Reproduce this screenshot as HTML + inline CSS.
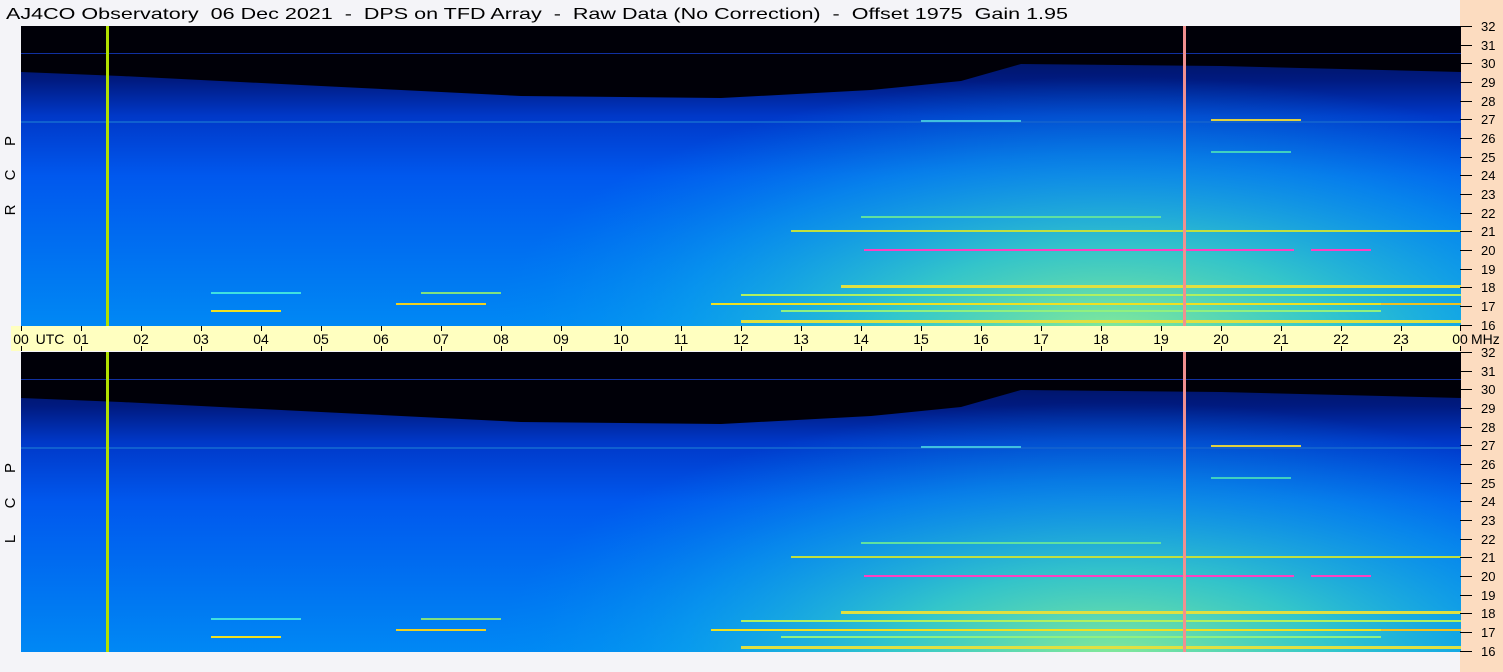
<!DOCTYPE html>
<html><head><meta charset="utf-8"><style>
html,body{margin:0;padding:0;background:#f4f4f8;width:1503px;height:672px;overflow:hidden}
svg{display:block;font-family:"Liberation Sans",sans-serif}
</style></head><body>
<svg width="1503" height="672" viewBox="0 0 1503 672" xmlns="http://www.w3.org/2000/svg">
<defs>
<linearGradient id="vg" x1="0" y1="0" x2="0" y2="1">
<stop offset="0" stop-color="#000c40"/>
<stop offset="0.18" stop-color="#001a80"/>
<stop offset="0.3" stop-color="#0038c8"/>
<stop offset="0.5" stop-color="#0058ee"/>
<stop offset="1" stop-color="#0088f4"/>
</linearGradient>
<radialGradient id="cy" cx="1090" cy="310" r="620" gradientUnits="userSpaceOnUse" gradientTransform="translate(0,310) scale(1,0.42) translate(0,-310)">
<stop offset="0" stop-color="#90f090" stop-opacity="0.95"/>
<stop offset="0.35" stop-color="#40d8c0" stop-opacity="0.8"/>
<stop offset="0.7" stop-color="#10b0e8" stop-opacity="0.45"/>
<stop offset="1" stop-color="#0090f0" stop-opacity="0"/>
</radialGradient>
<g id="panel">
<rect x="0" y="0" width="1440" height="300" fill="url(#vg)"/>
<rect x="0" y="0" width="1440" height="300" fill="url(#cy)"/>
<polygon points="0,0 1440,0 1440,46 1200,40 1000,38 940,55 850,64 700,72 500,70 300,60 100,50 0,46" fill="#000008"/>
<rect x="0" y="27" width="1440" height="1" fill="#1030a0"/>
<rect x="0" y="95" width="1440" height="2" fill="#1060d0"/>
<rect x="900" y="94" width="100" height="2" fill="#40c0e0"/>
<rect x="1190" y="93" width="90" height="2" fill="#e0d040"/>
<rect x="843" y="223" width="430" height="2" fill="#ff40c0"/>
<rect x="1290" y="223" width="60" height="2" fill="#ff40c0"/>
<rect x="770" y="204" width="670" height="2" fill="#c0e040"/>
<rect x="840" y="190" width="300" height="2" fill="#60e0a0"/>
<rect x="820" y="259" width="620" height="3" fill="#e0e040"/>
<rect x="720" y="268" width="720" height="2" fill="#b0f060"/>
<rect x="690" y="277" width="670" height="2" fill="#f0e020"/>
<rect x="1360" y="277" width="80" height="2" fill="#f0c020"/>
<rect x="760" y="284" width="600" height="2" fill="#90f080"/>
<rect x="720" y="294" width="720" height="3" fill="#e0e040"/>
<rect x="375" y="277" width="90" height="2" fill="#f0d020"/>
<rect x="190" y="266" width="90" height="2" fill="#40e0e0"/>
<rect x="190" y="284" width="70" height="2" fill="#f0e020"/>
<rect x="400" y="266" width="80" height="2" fill="#80e080"/>
<rect x="1190" y="125" width="80" height="2" fill="#40d0c0"/>
<rect x="85" y="0" width="3" height="300" fill="#b0e000"/>
<rect x="1162" y="0" width="3" height="300" fill="#f09090"/>
</g>
</defs>
<text x="6" y="19" font-size="16" fill="#000" xml:space="preserve" style="white-space:pre" textLength="1062" lengthAdjust="spacingAndGlyphs">AJ4CO Observatory  06 Dec 2021  -  DPS on TFD Array  -  Raw Data (No Correction)  -  Offset 1975  Gain 1.95</text>
<rect x="1460" y="0" width="43" height="672" fill="#fcdcc0"/>
<use href="#panel" x="21" y="26"/>
<use href="#panel" x="21" y="352"/>
<rect x="11" y="326" width="1449" height="25" fill="#ffffc0"/>
<g stroke="#000" stroke-width="1">
<path d="M21.5 326v5M21.5 346v5M81.5 326v5M81.5 346v5M141.5 326v5M141.5 346v5M201.5 326v5M201.5 346v5M261.5 326v5M261.5 346v5M321.5 326v5M321.5 346v5M381.5 326v5M381.5 346v5M441.5 326v5M441.5 346v5M501.5 326v5M501.5 346v5M561.5 326v5M561.5 346v5M621.5 326v5M621.5 346v5M681.5 326v5M681.5 346v5M741.5 326v5M741.5 346v5M801.5 326v5M801.5 346v5M861.5 326v5M861.5 346v5M921.5 326v5M921.5 346v5M981.5 326v5M981.5 346v5M1041.5 326v5M1041.5 346v5M1101.5 326v5M1101.5 346v5M1161.5 326v5M1161.5 346v5M1221.5 326v5M1221.5 346v5M1281.5 326v5M1281.5 346v5M1341.5 326v5M1341.5 346v5M1401.5 326v5M1401.5 346v5M1460.5 326v5M1460.5 346v5"/>
</g>
<g font-size="14" fill="#000" text-anchor="middle">
<text x="21" y="344">00</text><text x="50" y="344">UTC</text><text x="81" y="344">01</text><text x="141" y="344">02</text><text x="201" y="344">03</text><text x="261" y="344">04</text><text x="321" y="344">05</text><text x="381" y="344">06</text><text x="441" y="344">07</text><text x="501" y="344">08</text><text x="561" y="344">09</text><text x="621" y="344">10</text><text x="681" y="344">11</text><text x="741" y="344">12</text><text x="801" y="344">13</text><text x="861" y="344">14</text><text x="921" y="344">15</text><text x="981" y="344">16</text><text x="1041" y="344">17</text><text x="1101" y="344">18</text><text x="1161" y="344">19</text><text x="1221" y="344">20</text><text x="1281" y="344">21</text><text x="1341" y="344">22</text><text x="1401" y="344">23</text><text x="1460" y="344">00</text>
</g>
<text x="1471" y="344" font-size="14">MHz</text>
<g id="scale" font-size="13" fill="#000">
<path stroke="#000" d="M1460 26.5h12M1460 45.5h12M1460 63.5h12M1460 82.5h12M1460 101.5h12M1460 119.5h12M1460 138.5h12M1460 157.5h12M1460 175.5h12M1460 194.5h12M1460 213.5h12M1460 231.5h12M1460 250.5h12M1460 269.5h12M1460 287.5h12M1460 306.5h12M1460 325.5h12"/>
<text x="1481" y="31">32</text><text x="1481" y="50">31</text><text x="1481" y="68">30</text><text x="1481" y="87">29</text><text x="1481" y="106">28</text><text x="1481" y="124">27</text><text x="1481" y="143">26</text><text x="1481" y="162">25</text><text x="1481" y="180">24</text><text x="1481" y="199">23</text><text x="1481" y="218">22</text><text x="1481" y="236">21</text><text x="1481" y="255">20</text><text x="1481" y="274">19</text><text x="1481" y="292">18</text><text x="1481" y="311">17</text><text x="1481" y="330">16</text>
</g>
<use href="#scale" x="0" y="326"/>
<g font-size="15" fill="#000" text-anchor="middle">
<text transform="translate(15,141) rotate(-90)">P</text>
<text transform="translate(15,175) rotate(-90)">C</text>
<text transform="translate(15,210) rotate(-90)">R</text>
<text transform="translate(15,468) rotate(-90)">P</text>
<text transform="translate(15,503) rotate(-90)">C</text>
<text transform="translate(15,539) rotate(-90)">L</text>
</g>
</svg>
</body></html>
